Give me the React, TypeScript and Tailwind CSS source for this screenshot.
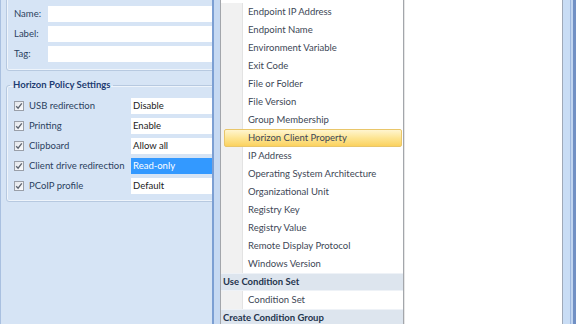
import React from "react";

const fieldRows = ["Name:", "Label:", "Tag:"];

const policies = [
  {label: "USB redirection", value: "Disable"},
  {label: "Printing", value: "Enable"},
  {label: "Clipboard", value: "Allow all"},
  {label: "Client drive redirection", value: "Read-only", selected: true},
  {label: "PCoIP profile", value: "Default"},
];

const menuItems = [
  "Endpoint IP Address",
  "Endpoint Name",
  "Environment Variable",
  "Exit Code",
  "File or Folder",
  "File Version",
  "Group Membership",
  "Horizon Client Property",
  "IP Address",
  "Operating System Architecture",
  "Organizational Unit",
  "Registry Key",
  "Registry Value",
  "Remote Display Protocol",
  "Windows Version",
];

function CheckBox() {
  return (
    <div className="w-[10px] h-[10px] border border-[#9a9fa8] bg-gradient-to-br from-[#e4e7ec] to-[#fafbfc] flex items-center justify-center">
      <svg width="8" height="8" viewBox="0 0 8 8">
        <path d="M1.2 4.2 L3.1 6.2 L6.8 1.4" fill="none" stroke="#5d6470" strokeWidth="1.3" />
      </svg>
    </div>
  );
}

function MenuItem({text, active}: {text: string; active?: boolean}) {
  return (
    <div className="flex h-[18px]">
      <div className="w-[22px] bg-[#f1f1f1] border-r border-[#e3e3e3]" />
      <div className="flex-1 border-l border-white relative">
        {active && (
          <div className="absolute left-[-20px] right-[1px] top-0 bottom-0 rounded-[2px] border border-[#e9c66a] bg-gradient-to-b from-[#fff5cf] via-[#fde592] to-[#fbd25e]" />
        )}
        <span className="relative leading-[18px] pl-[4px] text-[#3d4756] whitespace-nowrap">{text}</span>
      </div>
    </div>
  );
}

function MenuHeader({text}: {text: string}) {
  return (
    <div className="h-[18px] bg-[#dde5ee] border-y border-[#eef2f7] pl-[2px] font-bold text-[#24344d] leading-[16px] whitespace-nowrap">
      {text}
    </div>
  );
}

export default function App() {
  return (
    <div className="flex w-[576px] h-[324px] overflow-hidden bg-white font-['Lato',sans-serif] text-[9.5px]">
      {/* left settings panel */}
      <div className="w-[212px] h-full bg-[#d6e4f5] border-l border-[#a9c0e0] overflow-hidden shrink-0">
        <div className="w-[230px] ml-[5px] mt-[-10px]">
          <div className="border border-[#b7c9e0] rounded-[3px] shadow-[inset_0_0_0_1px_#eef4fb] pt-[15px] pb-[8px]">
            <div className="flex flex-col gap-[4px]">
              {fieldRows.map((f) => (
                <div key={f} className="flex items-center h-[16px]">
                  <span className="w-[41px] pl-[7px] text-[#2b3f5e]">{f}</span>
                  <div className="flex-1 h-full bg-white" />
                </div>
              ))}
            </div>
          </div>

          <fieldset className="mt-[8px] border border-[#b7c9e0] rounded-[3px] shadow-[inset_0_0_0_1px_#eef4fb] pb-[7px] pt-[7px]">
            <legend className="ml-[3px] px-[3px] font-bold text-[#1d3c72] leading-[12px]">
              Horizon Policy Settings
            </legend>
            <div className="flex flex-col gap-[4px]">
              {policies.map((p) => (
                <div key={p.label} className="flex items-center h-[16px]">
                  <div className="w-[22px] pl-[7px]">
                    <CheckBox />
                  </div>
                  <span className="w-[102px] text-[#2b3f5e] whitespace-nowrap">{p.label}</span>
                  <div
                    className={`flex-1 h-full flex items-center pl-[2px] ${
                      p.selected ? "bg-[#3399ff] text-white" : "bg-white text-[#1b1b1b]"
                    }`}
                  >
                    {p.value}
                  </div>
                </div>
              ))}
            </div>
          </fieldset>
        </div>
      </div>

      {/* splitter */}
      <div className="w-[2px] bg-[#7c9fd3] shrink-0" />
      <div className="w-[6px] bg-[#c6d9f2] shrink-0" />

      {/* dropdown menu */}
      <div className="w-[184px] h-full shrink-0 border-x border-[#a3a6ab] bg-white pt-[3px]">
        {menuItems.map((m) => (
          <MenuItem key={m} text={m} active={m === "Horizon Client Property"} />
        ))}
        <MenuHeader text="Use Condition Set" />
        <MenuItem text="Condition Set" />
        <MenuHeader text="Create Condition Group" />
      </div>

      {/* right white area */}
      <div className="flex-1 h-full border-l border-[#e6e6e6] bg-white" />

      {/* window frame */}
      <div className="w-[1px] bg-[#9fa9b8] shrink-0" />
      <div className="w-[7px] bg-[#c9ddf5] shrink-0" />
      <div className="w-[1px] bg-[#9db8e0] shrink-0" />
      <div className="w-[2px] bg-[#c1d5f0] shrink-0" />
      <div className="w-[3px] bg-[#7190c4] shrink-0" />
    </div>
  );
}
